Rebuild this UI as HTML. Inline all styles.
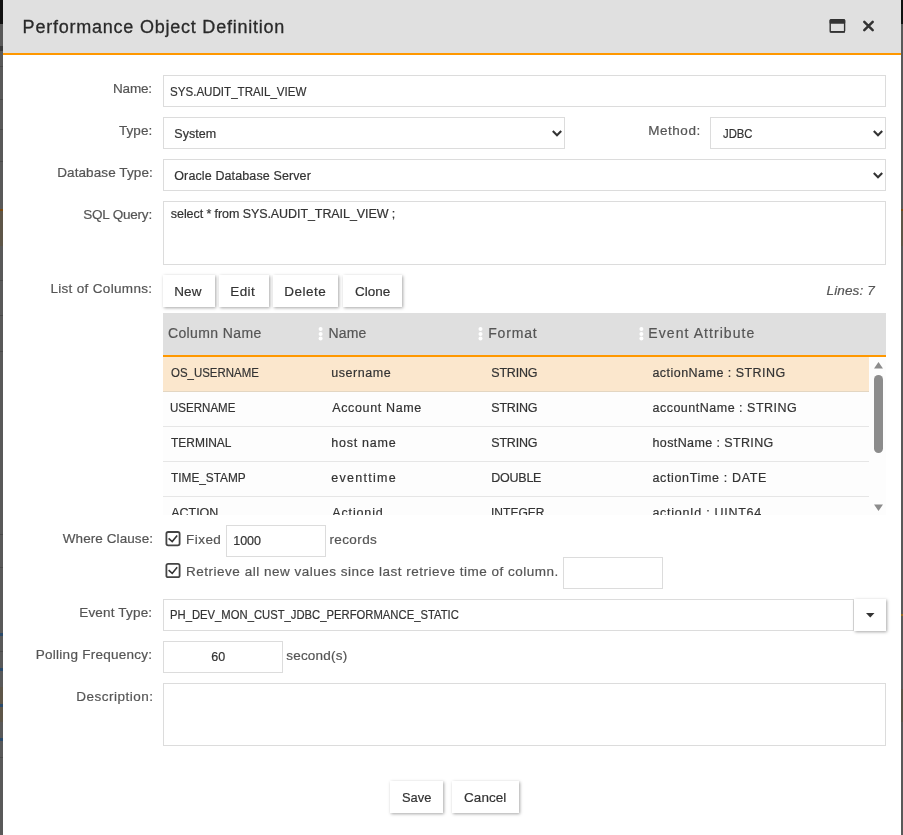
<!DOCTYPE html><html><head><meta charset="utf-8"><style>
*{box-sizing:border-box;margin:0;padding:0}
html,body{width:903px;height:835px;overflow:hidden;background:#595959;font-family:"Liberation Sans",sans-serif}
.t{position:absolute;white-space:pre;-webkit-text-stroke:0.2px currentColor}
.b{position:absolute}
</style></head><body><div class="b" style="left:0px;top:0px;width:3px;height:24px;background:#111"></div><div class="b" style="left:900px;top:0px;width:3px;height:24px;background:#111"></div><div class="b" style="left:0px;top:66px;width:3px;height:1px;background:#4a4a4a"></div><div class="b" style="left:0px;top:99px;width:3px;height:1px;background:#4a4a4a"></div><div class="b" style="left:0px;top:129px;width:3px;height:1px;background:#4a4a4a"></div><div class="b" style="left:0px;top:161px;width:3px;height:1px;background:#4a4a4a"></div><div class="b" style="left:0px;top:280px;width:3px;height:1px;background:#4a4a4a"></div><div class="b" style="left:0px;top:315px;width:3px;height:1px;background:#4a4a4a"></div><div class="b" style="left:0px;top:351px;width:3px;height:1px;background:#4a4a4a"></div><div class="b" style="left:0px;top:534px;width:3px;height:1px;background:#4a4a4a"></div><div class="b" style="left:0px;top:567px;width:3px;height:1px;background:#4a4a4a"></div><div class="b" style="left:0px;top:209px;width:3px;height:2px;background:#7a4a12"></div><div class="b" style="left:0px;top:211px;width:3px;height:35px;background:#5e5648"></div><div class="b" style="left:0px;top:46px;width:3px;height:5px;background:#3a3a3a"></div><div class="b" style="left:901px;top:209px;width:2px;height:2px;background:#7a4a12"></div><div class="b" style="left:901px;top:211px;width:2px;height:35px;background:#5e5648"></div><div class="b" style="left:901px;top:614px;width:2px;height:2px;background:#9a6a20"></div><div class="b" style="left:901px;top:689px;width:2px;height:33px;background:#5a5448"></div><div class="b" style="left:0px;top:687px;width:3px;height:35px;background:#5e5648"></div><div class="b" style="left:0px;top:633px;width:3px;height:3px;background:#2a4a6a"></div><div class="b" style="left:0px;top:668px;width:3px;height:3px;background:#2a4a6a"></div><div class="b" style="left:0px;top:704px;width:3px;height:3px;background:#2a4a6a"></div><div class="b" style="left:0px;top:738px;width:3px;height:3px;background:#2a4a6a"></div><div class="b" style="left:0px;top:651px;width:3px;height:1px;background:#4a4a4a"></div><div class="b" style="left:0px;top:757px;width:3px;height:1px;background:#4a4a4a"></div><div class="b" style="left:3px;top:0px;width:898px;height:835px;background:#fff"></div><div class="b" style="left:3px;top:0px;width:898px;height:53px;background:#e0e0e0"></div><div class="b" style="left:3px;top:53px;width:898px;height:2px;background:#ff9800"></div><div class="b" style="left:163px;top:75px;width:723px;height:32px;border:1px solid #dcdcdc;background:#fff"></div><div class="b" style="left:163px;top:117px;width:402px;height:32px;border:1px solid #dcdcdc;background:#fff"></div><div class="b" style="left:710px;top:117px;width:176px;height:32px;border:1px solid #dcdcdc;background:#fff"></div><div class="b" style="left:163px;top:159px;width:723px;height:32px;border:1px solid #dcdcdc;background:#fff"></div><div class="b" style="left:163px;top:201px;width:723px;height:64px;border:1px solid #dcdcdc;background:#fff"></div><div class="b" style="left:163px;top:275px;width:52px;height:32px;background:#fff;box-shadow:1px 1px 3px rgba(0,0,0,0.35)"></div><div class="b" style="left:219px;top:275px;width:50px;height:32px;background:#fff;box-shadow:1px 1px 3px rgba(0,0,0,0.35)"></div><div class="b" style="left:273px;top:275px;width:65px;height:32px;background:#fff;box-shadow:1px 1px 3px rgba(0,0,0,0.35)"></div><div class="b" style="left:343px;top:275px;width:59px;height:32px;background:#fff;box-shadow:1px 1px 3px rgba(0,0,0,0.35)"></div><div class="b" style="left:163px;top:313px;width:723px;height:42px;background:#dfdfdf"></div><div class="b" style="left:163px;top:355px;width:723px;height:2px;background:#ff9800"></div><div class="b" style="left:163px;top:357px;width:723px;height:158px;background:#fdfdfd;overflow:hidden"></div><div class="b" style="left:163px;top:357px;width:706px;height:34px;background:#fbe7cd"></div><div class="b" style="left:163px;top:391px;width:706px;height:1px;background:#e3d6c2"></div><div class="b" style="left:163px;top:426px;width:706px;height:1px;background:#e6e6e6"></div><div class="b" style="left:163px;top:461px;width:706px;height:1px;background:#e6e6e6"></div><div class="b" style="left:163px;top:496px;width:706px;height:1px;background:#e6e6e6"></div><div class="b" style="left:226px;top:525px;width:100px;height:32px;border:1px solid #dcdcdc;background:#fff"></div><div class="b" style="left:563px;top:557px;width:100px;height:32px;border:1px solid #dcdcdc;background:#fff"></div><div class="b" style="left:163px;top:599px;width:691px;height:32px;border:1px solid #dcdcdc;background:#fff"></div><div class="b" style="left:854px;top:599px;width:32px;height:32px;background:#fff;box-shadow:1px 1px 3px rgba(0,0,0,0.35)"></div><div class="b" style="left:163px;top:641px;width:120px;height:32px;border:1px solid #dcdcdc;background:#fff"></div><div class="b" style="left:163px;top:683px;width:723px;height:63px;border:1px solid #dcdcdc;background:#fff"></div><div class="b" style="left:390px;top:781px;width:53px;height:32px;background:#fff;box-shadow:1px 1px 3px rgba(0,0,0,0.35)"></div><div class="b" style="left:452px;top:781px;width:67px;height:32px;background:#fff;box-shadow:1px 1px 3px rgba(0,0,0,0.35)"></div><svg class="b" style="left:0;top:0" width="903" height="835">
<path d="M552.8 131 l4.2 4.2 l4.2 -4.2" fill="none" stroke="#333" stroke-width="2.1"/><path d="M873.8 131 l4.2 4.2 l4.2 -4.2" fill="none" stroke="#333" stroke-width="2.1"/><path d="M873.8 173 l4.2 4.2 l4.2 -4.2" fill="none" stroke="#333" stroke-width="2.1"/>
<rect x="830.2" y="19.8" width="14.4" height="12.2" rx="1.2" fill="none" stroke="#333" stroke-width="1.4"/>
<rect x="829.8" y="31" width="15.2" height="1.6" fill="#333"/>
<rect x="829.6" y="19.2" width="15.6" height="4.6" rx="1" fill="#333"/>
<path d="M864.3 21.8 L872.7 30.2 M872.7 21.8 L864.3 30.2" stroke="#333" stroke-width="2.5" stroke-linecap="round"/>
<path d="M866 613 h8.5 l-4.25 4.5 z" fill="#333"/>
<rect x="874" y="375" width="9" height="78" rx="4.5" fill="#8c8c8c"/>
<path d="M874 368.5 h9 l-4.5 -6.5 z" fill="#8c8c8c"/>
<path d="M874 504.5 h9 l-4.5 6.5 z" fill="#8c8c8c"/>
<rect x="166.4" y="532" width="13.2" height="13.4" rx="1.8" fill="none" stroke="#444" stroke-width="1.8"/>
<path d="M168.6 538.4 l3.6 3.2 l5 -6.2" fill="none" stroke="#333" stroke-width="1.6"/>
<rect x="166.4" y="563.8" width="13.2" height="13.4" rx="1.8" fill="none" stroke="#444" stroke-width="1.8"/>
<path d="M168.6 570.2 l3.6 3.2 l5 -6.2" fill="none" stroke="#333" stroke-width="1.6"/>
<circle cx="320.6" cy="329" r="2" fill="#fff"/><circle cx="320.6" cy="334" r="2" fill="#fff"/><circle cx="320.6" cy="338.6" r="2" fill="#fff"/><circle cx="480.5" cy="329" r="2" fill="#fff"/><circle cx="480.5" cy="334" r="2" fill="#fff"/><circle cx="480.5" cy="338.6" r="2" fill="#fff"/><circle cx="641.4" cy="329" r="2" fill="#fff"/><circle cx="641.4" cy="334" r="2" fill="#fff"/><circle cx="641.4" cy="338.6" r="2" fill="#fff"/></svg>
<div class="b" style="left:0;top:0;width:903px;height:835px;will-change:transform"><div class="t" style="left:22.62px;top:16px;font-size:18px;line-height:23px;letter-spacing:0.773px;color:#2a2a2a;-webkit-text-stroke:0.3px #2a2a2a;">Performance Object Definition</div><div class="t" style="left:112.99px;top:80px;font-size:13.5px;line-height:17px;letter-spacing:-0.170px;color:#555;">Name:</div><div class="t" style="left:118.89px;top:122px;font-size:13.5px;line-height:17px;letter-spacing:0.116px;color:#555;">Type:</div><div class="t" style="left:648.19px;top:122px;font-size:13.5px;line-height:17px;letter-spacing:0.534px;color:#555;">Method:</div><div class="t" style="left:57.19px;top:164px;font-size:13.5px;line-height:17px;letter-spacing:0.098px;color:#555;">Database Type:</div><div class="t" style="left:83.19px;top:206px;font-size:13.5px;line-height:17px;letter-spacing:-0.199px;color:#555;">SQL Query:</div><div class="t" style="left:50.39px;top:280px;font-size:13.5px;line-height:17px;letter-spacing:0.327px;color:#555;">List of Columns:</div><div class="t" style="left:62.79px;top:530px;font-size:13.5px;line-height:17px;letter-spacing:0.075px;color:#555;">Where Clause:</div><div class="t" style="left:79.19px;top:604px;font-size:13.5px;line-height:17px;letter-spacing:0.184px;color:#555;">Event Type:</div><div class="t" style="left:35.79px;top:646px;font-size:13.5px;line-height:17px;letter-spacing:0.263px;color:#555;">Polling Frequency:</div><div class="t" style="left:76.19px;top:688px;font-size:13.5px;line-height:17px;letter-spacing:0.501px;color:#555;">Description:</div><div class="t" style="left:170.25px;top:84px;font-size:12.5px;line-height:16px;color:#333;transform:scaleX(0.9264);transform-origin:0 0;">SYS.AUDIT_TRAIL_VIEW</div><div class="t" style="left:174.35px;top:126px;font-size:12.5px;line-height:16px;letter-spacing:0.005px;color:#333;">System</div><div class="t" style="left:722.65px;top:126px;font-size:12.5px;line-height:16px;color:#333;transform:scaleX(0.9038);transform-origin:0 0;">JDBC</div><div class="t" style="left:174.25px;top:168px;font-size:12.5px;line-height:16px;letter-spacing:0.120px;color:#333;">Oracle Database Server</div><div class="t" style="left:170.85px;top:206px;font-size:12.5px;line-height:16px;letter-spacing:-0.078px;color:#333;">select * from SYS.AUDIT_TRAIL_VIEW ;</div><div class="t" style="left:174.19px;top:283px;font-size:13.5px;line-height:17px;letter-spacing:0.137px;color:#333;">New</div><div class="t" style="left:230.29px;top:283px;font-size:13.5px;line-height:17px;letter-spacing:0.373px;color:#333;">Edit</div><div class="t" style="left:284.19px;top:283px;font-size:13.5px;line-height:17px;letter-spacing:0.512px;color:#333;">Delete</div><div class="t" style="left:355.09px;top:283px;font-size:13.5px;line-height:17px;letter-spacing:-0.048px;color:#333;">Clone</div><div class="t" style="left:826.49px;top:282px;font-size:13.5px;line-height:17px;letter-spacing:0.143px;color:#555;font-style:italic;">Lines: 7</div><div class="t" style="left:167.96px;top:324px;font-size:14px;line-height:18px;letter-spacing:0.385px;color:#555;">Column Name</div><div class="t" style="left:328.56px;top:324px;font-size:14px;line-height:18px;letter-spacing:0.126px;color:#555;">Name</div><div class="t" style="left:488.16px;top:324px;font-size:14px;line-height:18px;letter-spacing:0.837px;color:#555;">Format</div><div class="t" style="left:648.36px;top:324px;font-size:14px;line-height:18px;letter-spacing:1.062px;color:#555;">Event Attribute</div><div class="t" style="left:186.09px;top:531px;font-size:13.5px;line-height:17px;letter-spacing:0.443px;color:#555;">Fixed</div><div class="t" style="left:233.35px;top:533px;font-size:12.5px;line-height:16px;letter-spacing:-0.102px;color:#333;">1000</div><div class="t" style="left:329.39px;top:531px;font-size:13.5px;line-height:17px;letter-spacing:0.411px;color:#555;">records</div><div class="t" style="left:186.09px;top:563px;font-size:13.5px;line-height:17px;letter-spacing:0.505px;color:#555;">Retrieve all new values since last retrieve time of column.</div><div class="t" style="left:170.35px;top:607px;font-size:12.5px;line-height:16px;color:#333;transform:scaleX(0.9013);transform-origin:0 0;">PH_DEV_MON_CUST_JDBC_PERFORMANCE_STATIC</div><div class="t" style="left:211.25px;top:649px;font-size:12.5px;line-height:16px;letter-spacing:0.098px;color:#333;">60</div><div class="t" style="left:286.19px;top:647px;font-size:13.5px;line-height:17px;letter-spacing:0.226px;color:#555;">second(s)</div><div class="t" style="left:401.79px;top:789px;font-size:13.5px;line-height:17px;color:#333;transform:scaleX(0.9532);transform-origin:0 0;">Save</div><div class="t" style="left:464.09px;top:789px;font-size:13.5px;line-height:17px;letter-spacing:0.032px;color:#333;">Cancel</div></div>
<div class="b" style="left:0;top:0;width:903px;height:515px;overflow:hidden;will-change:transform"><div class="t" style="left:171.35px;top:365px;font-size:12.5px;line-height:16px;color:#333;transform:scaleX(0.9161);transform-origin:0 0;">OS_USERNAME</div><div class="t" style="left:331.25px;top:365px;font-size:12.5px;line-height:16px;letter-spacing:0.560px;color:#333;">username</div><div class="t" style="left:491.25px;top:365px;font-size:12.5px;line-height:16px;letter-spacing:-0.205px;color:#333;">STRING</div><div class="t" style="left:652.45px;top:365px;font-size:12.5px;line-height:16px;letter-spacing:0.470px;color:#333;">actionName : STRING</div><div class="t" style="left:170.35px;top:400px;font-size:12.5px;line-height:16px;color:#333;transform:scaleX(0.9235);transform-origin:0 0;">USERNAME</div><div class="t" style="left:332.25px;top:400px;font-size:12.5px;line-height:16px;letter-spacing:0.638px;color:#333;">Account Name</div><div class="t" style="left:491.25px;top:400px;font-size:12.5px;line-height:16px;letter-spacing:-0.205px;color:#333;">STRING</div><div class="t" style="left:652.45px;top:400px;font-size:12.5px;line-height:16px;letter-spacing:0.507px;color:#333;">accountName : STRING</div><div class="t" style="left:171.35px;top:435px;font-size:12.5px;line-height:16px;color:#333;transform:scaleX(0.9566);transform-origin:0 0;">TERMINAL</div><div class="t" style="left:331.25px;top:435px;font-size:12.5px;line-height:16px;letter-spacing:0.755px;color:#333;">host name</div><div class="t" style="left:491.25px;top:435px;font-size:12.5px;line-height:16px;letter-spacing:-0.205px;color:#333;">STRING</div><div class="t" style="left:652.45px;top:435px;font-size:12.5px;line-height:16px;letter-spacing:0.393px;color:#333;">hostName : STRING</div><div class="t" style="left:171.35px;top:470px;font-size:12.5px;line-height:16px;color:#333;transform:scaleX(0.9469);transform-origin:0 0;">TIME_STAMP</div><div class="t" style="left:331.25px;top:470px;font-size:12.5px;line-height:16px;letter-spacing:1.276px;color:#333;">eventtime</div><div class="t" style="left:491.25px;top:470px;font-size:12.5px;line-height:16px;letter-spacing:-0.241px;color:#333;">DOUBLE</div><div class="t" style="left:652.45px;top:470px;font-size:12.5px;line-height:16px;letter-spacing:0.650px;color:#333;">actionTime : DATE</div><div class="t" style="left:171.35px;top:505px;font-size:12.5px;line-height:16px;letter-spacing:-0.065px;color:#333;">ACTION</div><div class="t" style="left:332.25px;top:505px;font-size:12.5px;line-height:16px;letter-spacing:0.862px;color:#333;">Actionid</div><div class="t" style="left:491.25px;top:505px;font-size:12.5px;line-height:16px;color:#333;transform:scaleX(0.9641);transform-origin:0 0;">INTEGER</div><div class="t" style="left:652.45px;top:505px;font-size:12.5px;line-height:16px;letter-spacing:0.721px;color:#333;">actionId : UINT64</div></div>
</body></html>
